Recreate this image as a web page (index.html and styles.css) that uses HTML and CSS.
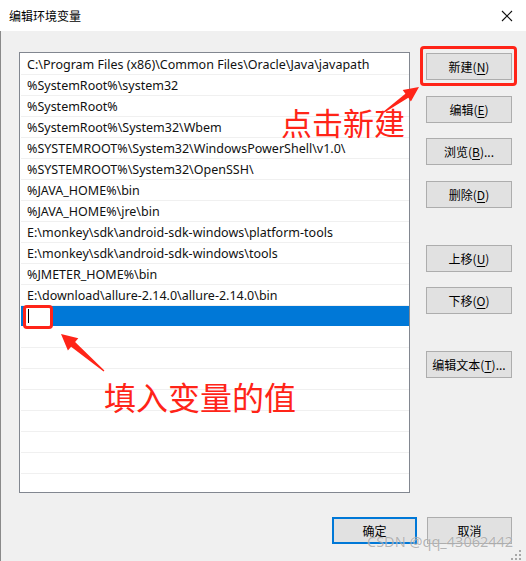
FILE: index.html
```html
<!DOCTYPE html>
<html lang="zh-CN">
<head>
<meta charset="utf-8">
<title>编辑环境变量</title>
<link rel="stylesheet" href="styles.css">
</head>
<body>
<div class="window">
  <div class="titlebar">
    <span class="title">编辑环境变量</span>
    <svg class="close" width="12" height="12" viewBox="0 0 12 12"><path d="M1 1 L11 11 M11 1 L1 11" stroke="#111" stroke-width="1.1" fill="none"/></svg>
  </div>
  <div class="content">
    <div class="main">
      <div class="list">
        <div class="row">C:\Program Files (x86)\Common Files\Oracle\Java\javapath</div>
        <div class="row">%SystemRoot%\system32</div>
        <div class="row">%SystemRoot%</div>
        <div class="row">%SystemRoot%\System32\Wbem</div>
        <div class="row">%SYSTEMROOT%\System32\WindowsPowerShell\v1.0\</div>
        <div class="row">%SYSTEMROOT%\System32\OpenSSH\</div>
        <div class="row">%JAVA_HOME%\bin</div>
        <div class="row">%JAVA_HOME%\jre\bin</div>
        <div class="row">E:\monkey\sdk\android-sdk-windows\platform-tools</div>
        <div class="row">E:\monkey\sdk\android-sdk-windows\tools</div>
        <div class="row">%JMETER_HOME%\bin</div>
        <div class="row">E:\download\allure-2.14.0\allure-2.14.0\bin</div>
        <div class="row selected"><div class="editbox"><span class="caret"></span></div></div>
        <div class="row"></div>
        <div class="row"></div>
        <div class="row"></div>
        <div class="row"></div>
        <div class="row"></div>
        <div class="row"></div>
        <div class="row"></div>
        <div class="row"></div>
      </div>
      <div class="side">
        <button class="btn b-new">新建(<u>N</u>)</button>
        <button class="btn b-edit">编辑(<u>E</u>)</button>
        <button class="btn b-browse">浏览(<u>B</u>)...</button>
        <button class="btn b-del">删除(<u>D</u>)</button>
        <button class="btn b-up">上移(<u>U</u>)</button>
        <button class="btn b-down">下移(<u>O</u>)</button>
        <button class="btn b-text">编辑文本(<u>T</u>)...</button>
      </div>
    </div>
    <div class="footer">
      <button class="btn primary">确定</button>
      <button class="btn">取消</button>
    </div>
  </div>

  <div class="mark mark-new"></div>
  <div class="mark mark-edit"></div>
  <div class="note note-new">点击新建</div>
  <div class="note note-value">填入变量的值</div>
  <svg class="arrows" width="526" height="561" viewBox="0 0 526 561">
    <polygon fill="#ff2418" points="419,87 402.7,90 405.4,93.7 383.6,111.4 384.4,112.6 408.3,97.7 410.9,101.4"/>
    <polygon fill="#ff2418" points="61,334 78.3,338.3 75.1,342.1 104.4,370.4 103.6,371.6 71.1,346.7 67.9,350.5"/>
  </svg>
  <div class="watermark">CSDN @qq_43062442</div>
  <svg class="grip" width="10" height="10" viewBox="0 0 10 10">
    <rect x="8" y="0" width="2" height="2" fill="#a8a8a8"/>
    <rect x="4" y="4" width="2" height="2" fill="#a8a8a8"/>
    <rect x="8" y="4" width="2" height="2" fill="#a8a8a8"/>
    <rect x="0" y="8" width="2" height="2" fill="#a8a8a8"/>
    <rect x="4" y="8" width="2" height="2" fill="#a8a8a8"/>
    <rect x="8" y="8" width="2" height="2" fill="#a8a8a8"/>
  </svg>
</div>
</body>
</html>
```
FILE: styles.css
```css
* { box-sizing: border-box; }
html, body { margin: 0; padding: 0; }
body {
  font-family: "Noto Sans", "Noto Sans CJK SC", sans-serif;
  font-size: 12px;
  color: #000;
  background: #f0f0f0;
}
.window {
  position: relative;
  width: 526px;
  height: 561px;
  overflow: hidden;
  background: #f0f0f0;
  display: flex;
  flex-direction: column;
}
.titlebar {
  height: 31px;
  background: #fff;
  display: flex;
  align-items: center;
  justify-content: space-between;
  padding: 0 13px 0 9px;
  flex: none;
}
.title {
  font-family: "Noto Sans CJK SC", sans-serif;
  font-size: 12px;
  line-height: 14px;
  margin-top: 1px;
}
.close { display: block; }
.content {
  flex: 1;
  border-left: 1px solid #8a8a8a;
  padding: 21px 0 0 18px;
  display: flex;
  flex-direction: column;
}
.main {
  display: flex;
  gap: 16px;
}
.list {
  width: 391px;
  height: 441px;
  border: 1px solid #828790;
  background: #fff;
  padding-top: 1px;
  overflow: hidden;
}
.row {
  height: 21px;
  line-height: 21px;
  font-size: 12.5px;
  margin-left: 1px;
  padding-left: 6px;
  border-bottom: 1px solid #f0f0f0;
  white-space: nowrap;
  color: #111;
}
.row.selected {
  background: #0078d7;
  border-bottom-color: #fff;
  padding-left: 4px;
  display: flex;
}
.editbox {
  width: 25px;
  height: 20px;
  background: #fff;
  position: relative;
}
.caret {
  position: absolute;
  left: 3px;
  top: 3px;
  width: 1px;
  height: 14px;
  background: #000;
}
.side {
  display: flex;
  flex-direction: column;
  padding-top: 1px;
}
.btn {
  width: 86px;
  height: 27px;
  background: #e1e1e1;
  border: 1px solid #adadad;
  font-family: "Noto Sans CJK SC", sans-serif;
  font-size: 12px;
  color: #000;
  padding: 0;
  display: flex;
  align-items: center;
  justify-content: center;
  line-height: 14px;
}
.btn u { text-underline-offset: 2px; }
.b-new { margin-bottom: 16px; }
.b-edit { margin-bottom: 15px; }
.b-browse { margin-bottom: 16px; }
.b-del { margin-bottom: 37px; }
.b-up { margin-bottom: 15px; }
.b-down { margin-bottom: 37px; }
.footer {
  display: flex;
  justify-content: flex-end;
  gap: 10px;
  padding-right: 14px;
  margin-top: 24px;
}
.footer .btn { width: 85px; }
.btn.primary { border: 2px solid #0078d7; }

.mark {
  position: absolute;
  border: 3px solid #ff2418;
  border-radius: 4px;
}
.mark-new { left: 420px; top: 46px; width: 97px; height: 40px; }
.mark-edit { left: 23px; top: 305px; width: 30px; height: 24px; }
.note {
  position: absolute;
  font-family: "Noto Sans CJK SC", sans-serif;
  color: #ff2418;
  line-height: 1;
  white-space: nowrap;
}
.note-new { left: 281px; top: 106px; font-size: 31px; }
.note-value { left: 104px; top: 380px; font-size: 32px; }
.arrows { position: absolute; left: 0; top: 0; pointer-events: none; }
.watermark {
  position: absolute;
  left: 367px;
  top: 532px;
  font-family: "Noto Sans", sans-serif;
  font-size: 14.5px;
  line-height: 18px;
  color: rgba(120, 120, 120, 0.55);
  text-shadow: 0 0 1px rgba(255,255,255,0.8);
  white-space: nowrap;
}
.grip { position: absolute; right: 5px; bottom: 1px; }
```
